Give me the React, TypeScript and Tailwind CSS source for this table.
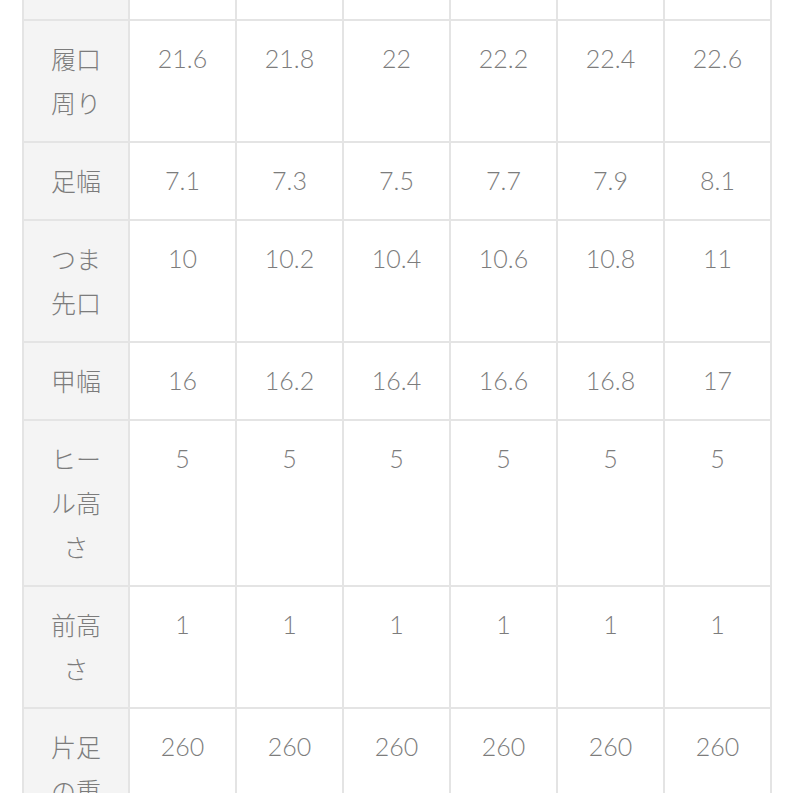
import React from "react";

const rows: { label: string[]; values: string[] }[] = [
  { label: ["履口", "周り"], values: ["21.6", "21.8", "22", "22.2", "22.4", "22.6"] },
  { label: ["足幅"], values: ["7.1", "7.3", "7.5", "7.7", "7.9", "8.1"] },
  { label: ["つま", "先口"], values: ["10", "10.2", "10.4", "10.6", "10.8", "11"] },
  { label: ["甲幅"], values: ["16", "16.2", "16.4", "16.6", "16.8", "17"] },
  { label: ["ヒー", "ル高", "さ"], values: ["5", "5", "5", "5", "5", "5"] },
  { label: ["前高", "さ"], values: ["1", "1", "1", "1", "1", "1"] },
  { label: ["片足", "の重", "さ"], values: ["260", "260", "260", "260", "260", "260"] },
];

export default function App() {
  return (
    <div className="w-[793px] h-[793px] overflow-hidden bg-white pl-[22px]">
      <table
        className="table-fixed border-collapse w-[750px] text-[#7c7c7c] font-light"
        style={{ fontFamily: '"Lato", "Noto Sans CJK JP", sans-serif' }}
      >
        <colgroup>
          <col className="w-[106px]" />
          <col className="w-[107px]" />
          <col className="w-[107px]" />
          <col className="w-[107px]" />
          <col className="w-[107px]" />
          <col className="w-[107px]" />
          <col className="w-[107px]" />
        </colgroup>
        <tbody>
          <tr className="h-[20px]">
            <td className="border-2 border-t-0 border-[#e4e4e4] bg-[#f4f4f4] p-0"></td>
            {[0, 1, 2, 3, 4, 5].map((i) => (
              <td key={i} className="border-2 border-t-0 border-[#e4e4e4] p-0"></td>
            ))}
          </tr>
          {rows.map((r, ri) => (
            <tr key={ri}>
              <td
                className="border-2 border-[#e4e4e4] bg-[#f4f4f4] align-top text-center pt-[15px] pb-[17px] px-0 text-[25px] leading-[44px] font-light"
                style={{ fontFamily: '"Noto Sans CJK JP", sans-serif' }}
              >
                {r.label.map((l, li) => (
                  <div key={li}>{l}</div>
                ))}
              </td>
              {r.values.map((v, vi) => (
                <td
                  key={vi}
                  className="border-2 border-[#e4e4e4] align-top text-center pt-[15px] pb-[17px] px-0 text-[25px] leading-[44px]"
                >
                  {v}
                </td>
              ))}
            </tr>
          ))}
        </tbody>
      </table>
    </div>
  );
}
